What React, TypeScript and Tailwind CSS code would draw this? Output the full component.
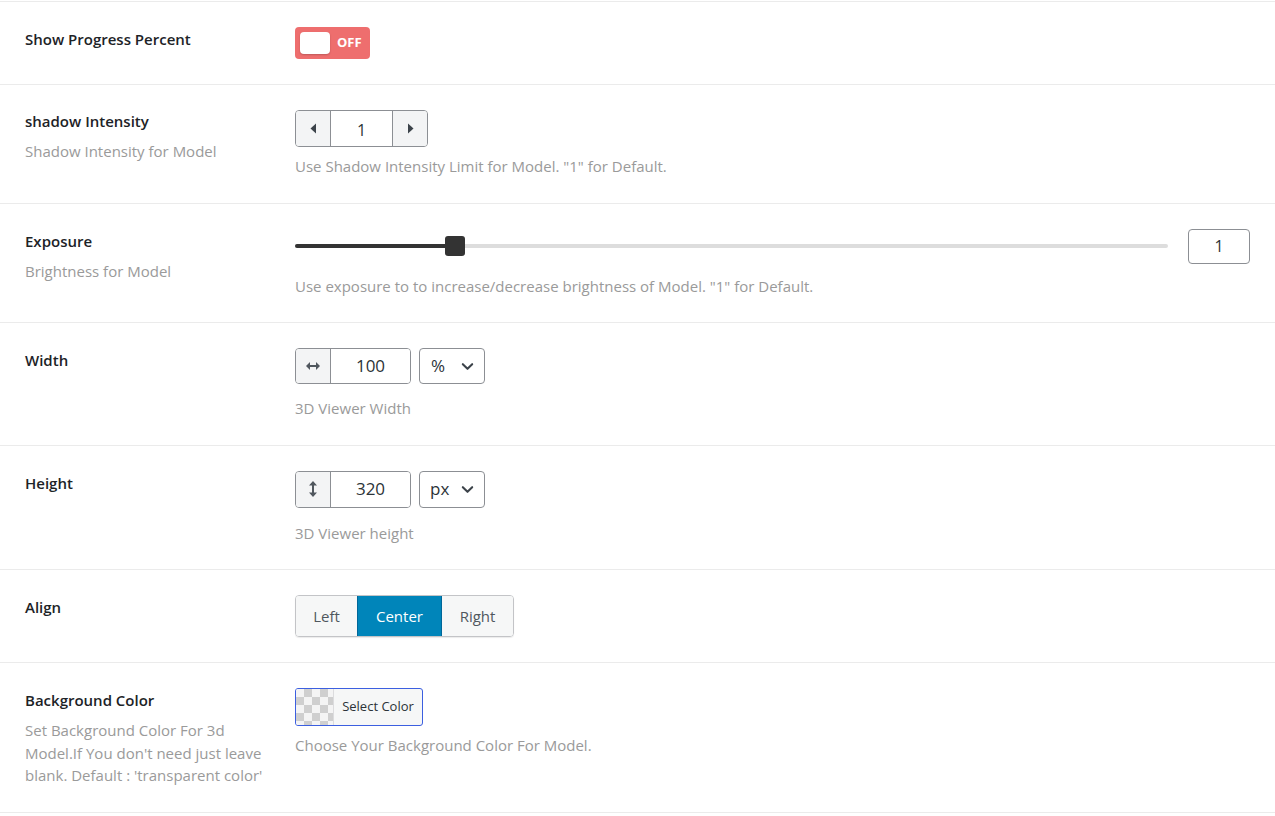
import React from "react";

function Label({ title, desc, className = "" }: { title: string; desc?: React.ReactNode; className?: string }) {
  return (
    <div className={`w-[250px] shrink-0 ${className}`}>
      <div className="text-[15px] font-semibold leading-[22px] text-[#1d2327]">{title}</div>
      {desc && <div className="mt-2 text-[15px] leading-[22.5px] text-[#9a9a9a]">{desc}</div>}
    </div>
  );
}

function Row({ children }: { children: React.ReactNode }) {
  return <div className="flex gap-[20px] border-b border-[#ebebeb] py-[25px] pl-[25px] pr-[25px]">{children}</div>;
}

function Help({ children, className = "" }: { children: React.ReactNode; className?: string }) {
  return <div className={`text-[15px] leading-[22.5px] text-[#9a9a9a] ${className}`}>{children}</div>;
}

function Chevron() {
  return (
    <svg width="15" height="15" viewBox="0 0 16 16" fill="none" stroke="#3c434a" strokeWidth="2.2" strokeLinecap="round" strokeLinejoin="round">
      <path d="M3 5.5l5 5 5-5" />
    </svg>
  );
}

export default function App() {
  return (
    <div className="min-h-[816px] bg-white font-['Open_Sans',sans-serif]">
      <div className="border-t border-[#ebebeb] mt-px">
        {/* Row 1 */}
        <Row>
          <div className="w-[250px] shrink-0 pt-[1px]">
            <div className="text-[15px] font-semibold leading-[22px] text-[#1d2327]">Show Progress Percent</div>
          </div>
          <div>
            <div className="flex h-[32px] w-[75px] items-center rounded-[4px] bg-[#ee6e6e] pl-[5px]">
              <div className="h-[22px] w-[30px] rounded-[4px] bg-white shadow-[0_1px_2px_rgba(0,0,0,0.2)]" />
              <span className="ml-[7px] text-[13px] font-bold text-white">OFF</span>
            </div>
          </div>
        </Row>

        {/* Row 2 */}
        <Row>
          <Label title="shadow Intensity" desc="Shadow Intensity for Model" />
          <div>
            <div className="flex h-[37px] w-[133px] overflow-hidden rounded-[4px] border border-[#8c8f94]">
              <div className="flex w-[35px] items-center justify-center border-r border-[#8c8f94] bg-[#f3f4f5]">
                <svg width="7" height="11" viewBox="0 0 7 11"><path d="M6 0.5v10L0.5 5.5z" fill="#3c434a" /></svg>
              </div>
              <div className="flex flex-1 items-center justify-center bg-white pt-[2px] text-[16px] text-[#2c3338]">1</div>
              <div className="flex w-[35px] items-center justify-center border-l border-[#8c8f94] bg-[#f3f4f5]">
                <svg width="7" height="11" viewBox="0 0 7 11"><path d="M1 0.5v10L6.5 5.5z" fill="#3c434a" /></svg>
              </div>
            </div>
            <Help className="mt-[8px]">Use Shadow Intensity Limit for Model. "1" for Default.</Help>
          </div>
        </Row>

        {/* Row 3 */}
        <Row>
          <Label title="Exposure" desc="Brightness for Model" className="pt-px" />
          <div className="flex-1">
            <div className="flex items-center gap-5">
              <div className="relative h-[4px] flex-1 rounded-full bg-[#dddddd]">
                <div className="h-full w-[160px] rounded-full bg-[#333333]" />
                <div className="absolute left-[150px] top-1/2 h-[20px] w-[20px] -translate-y-1/2 rounded-[3px] bg-[#333333]" />
              </div>
              <div className="flex h-[35px] w-[62px] items-center justify-center rounded-[4px] border border-[#8c8f94] text-[16px] text-[#2c3338]">
                1
              </div>
            </div>
            <Help className="mt-[11px]">Use exposure to to increase/decrease brightness of Model. "1" for Default.</Help>
          </div>
        </Row>

        {/* Row 4 */}
        <Row>
          <Label title="Width" className="pt-px" />
          <div>
            <div className="flex gap-2">
              <div className="flex h-[36px] w-[116px] overflow-hidden rounded-[4px] border border-[#8c8f94]">
                <div className="flex w-[35px] items-center justify-center border-r border-[#8c8f94] bg-[#f3f4f5]">
                  <svg width="14" height="10" viewBox="0 0 14 10" fill="#50575e">
                    <path d="M0 5l4-4v3h6V1l4 4-4 4V6H4v3z" />
                  </svg>
                </div>
                <div className="flex flex-1 items-center justify-center bg-white text-[17px] text-[#2c3338]">100</div>
              </div>
              <div className="flex h-[36px] w-[66px] items-center justify-between rounded-[4px] border border-[#8c8f94] pl-[11px] pr-[9px] text-[17px] text-[#2c3338]">
                <span>%</span>
                <Chevron />
              </div>
            </div>
            <Help className="mt-[13px]">3D Viewer Width</Help>
          </div>
        </Row>

        {/* Row 5 */}
        <Row>
          <Label title="Height" className="pt-px" />
          <div>
            <div className="flex gap-2">
              <div className="flex h-[37px] w-[116px] overflow-hidden rounded-[4px] border border-[#8c8f94]">
                <div className="flex w-[35px] items-center justify-center border-r border-[#8c8f94] bg-[#f3f4f5]">
                  <svg width="10" height="16" viewBox="0 0 10 16" fill="#50575e">
                    <path d="M5 0l4 4.5H6v7h3L5 16l-4-4.5h3v-7H1z" />
                  </svg>
                </div>
                <div className="flex flex-1 items-center justify-center bg-white text-[17px] text-[#2c3338]">320</div>
              </div>
              <div className="flex h-[37px] w-[66px] items-center justify-between rounded-[4px] border border-[#8c8f94] pl-[10px] pr-[9px] text-[17px] text-[#2c3338]">
                <span>px</span>
                <Chevron />
              </div>
            </div>
            <Help className="mt-[14px]">3D Viewer height</Help>
          </div>
        </Row>

        {/* Row 6 */}
        <Row>
          <div className="w-[250px] shrink-0 pt-[1px]">
            <div className="text-[15px] font-semibold leading-[22px] text-[#1d2327]">Align</div>
          </div>
          <div className="flex h-[42px] overflow-hidden rounded-[4px] border border-[#c3c4c7] shadow-[0_1px_1px_rgba(0,0,0,0.08)]">
            <div className="flex w-[61px] items-center justify-center bg-[#f6f7f7] text-[15px] text-[#50575e]">Left</div>
            <div className="flex w-[85px] items-center justify-center border-x border-[#006799] bg-[#0085ba] text-[15px] text-white">Center</div>
            <div className="flex w-[71px] items-center justify-center bg-[#f6f7f7] text-[15px] text-[#50575e]">Right</div>
          </div>
        </Row>

        {/* Row 7 */}
        <Row>
          <Label
            className="pt-px"
            title="Background Color"
            desc="Set Background Color For 3d Model.If You don't need just leave blank. Default : 'transparent color'"
          />
          <div>
            <div className="flex h-[38px] w-[128px] overflow-hidden rounded-[3px] border border-[#3c5fe0] bg-[#f6f7f7]">
              <div className="w-[38px] border-r border-[#dcdcde] bg-[conic-gradient(#cfcfcf_25%,#f4f4f4_0_50%,#cfcfcf_0_75%,#f4f4f4_0)] bg-[length:16px_16px]" />
              <div className="flex flex-1 items-center justify-center text-[13px] text-[#2c3338]">Select Color</div>
            </div>
            <Help className="mt-[8px]">Choose Your Background Color For Model.</Help>
          </div>
        </Row>
      </div>
    </div>
  );
}
